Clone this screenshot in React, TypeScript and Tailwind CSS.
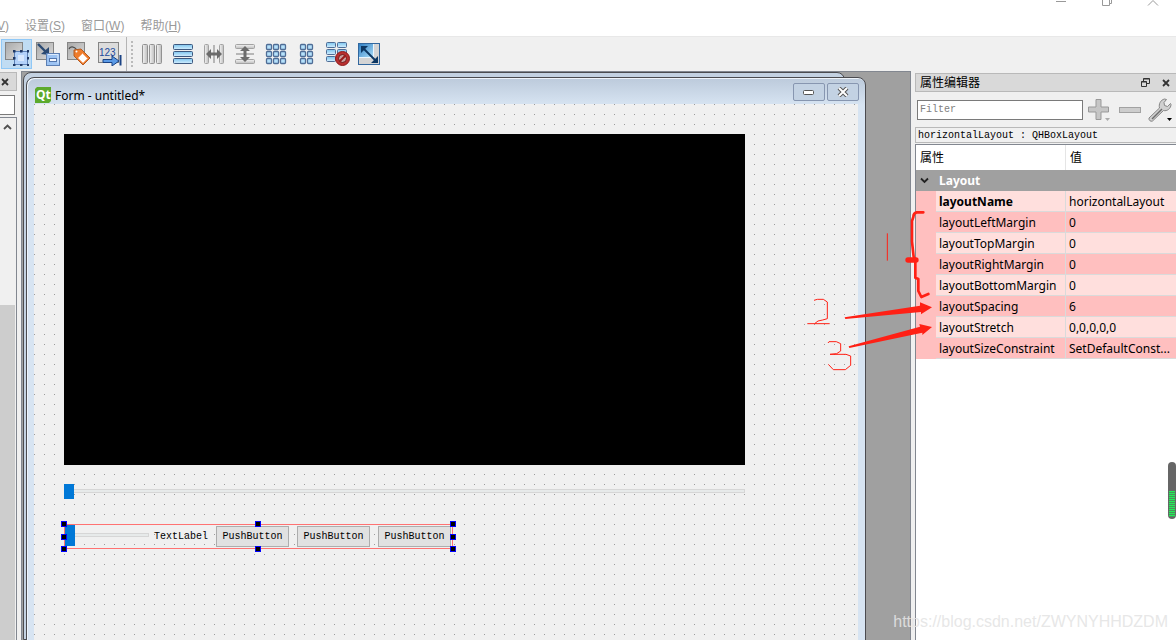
import React from "react";

const properties = [
  { name: "layoutName", value: "horizontalLayout", bold: true },
  { name: "layoutLeftMargin", value: "0" },
  { name: "layoutTopMargin", value: "0" },
  { name: "layoutRightMargin", value: "0" },
  { name: "layoutBottomMargin", value: "0" },
  { name: "layoutSpacing", value: "6" },
  { name: "layoutStretch", value: "0,0,0,0,0" },
  { name: "layoutSizeConstraint", value: "SetDefaultConst..." },
];

const menus = [
  { label: "设置", key: "S" },
  { label: "窗口", key: "W" },
  { label: "帮助", key: "H" },
];

// Gradients shared by all the toolbar icons
function IconDefs() {
  return (
    <svg className="absolute h-0 w-0" aria-hidden="true">
      <defs>
        <linearGradient id="grey" x1="0" y1="0" x2="1" y2="1">
          <stop offset="0" stopColor="#a9a9a9" />
          <stop offset="1" stopColor="#dcdcdc" />
        </linearGradient>
        <linearGradient id="bar" x1="0" y1="0" x2="1" y2="0">
          <stop offset="0" stopColor="#f4f4f4" />
          <stop offset="1" stopColor="#bdbdbd" />
        </linearGradient>
        <linearGradient id="blue" x1="0" y1="0" x2="0" y2="1">
          <stop offset="0" stopColor="#7cc4ee" />
          <stop offset="1" stopColor="#d5efff" />
        </linearGradient>
        <linearGradient id="sky" x1="0" y1="0" x2="1" y2="1">
          <stop offset="0" stopColor="#2f7fc4" />
          <stop offset="1" stopColor="#a8dcf8" />
        </linearGradient>
      </defs>
    </svg>
  );
}

function Icon({ children }: { children: React.ReactNode }) {
  return (
    <svg width="24" height="24" viewBox="0 0 24 24" fill="none" aria-hidden="true">
      {children}
    </svg>
  );
}

function GreyPanel() {
  return <rect x="0.5" y="0.5" width="17" height="17" fill="url(#grey)" stroke="#858585" />;
}

function EditWidgetsIcon() {
  const dots = [
    [8, 8], [15, 8], [22, 8], [8, 15], [22, 15], [8, 22], [15, 22], [22, 22],
  ];
  return (
    <Icon>
      <GreyPanel />
      <rect x="9.5" y="9.5" width="13" height="13" fill="#b3d2fa" stroke="#5b7fb5" />
      <rect x="13" y="13" width="6" height="6" fill="#d6e7fd" />
      {dots.map(([x, y]) => (
        <rect key={`${x}-${y}`} x={x} y={y} width="2.5" height="2.5" fill="#1f3864" />
      ))}
    </Icon>
  );
}

function EditSignalsIcon() {
  return (
    <Icon>
      <GreyPanel />
      <path d="M2 2l9 9" stroke="#2b4a73" strokeWidth="2.4" />
      <path d="M13 13V5L5 12z" fill="#2b4a73" />
      <rect x="10.5" y="11.5" width="13" height="12" fill="#9cc3f3" stroke="#5c7fb3" />
      <path d="M12 12.5h10v9" stroke="#dcebfd" />
      <rect x="13.5" y="16.5" width="7" height="3" fill="#f5f9ff" stroke="#5377ae" />
    </Icon>
  );
}

function EditBuddiesIcon() {
  return (
    <Icon>
      <GreyPanel />
      <path d="M2 7c1-3 5-3 8 1" stroke="#4e4e4e" strokeWidth="1.2" />
      <path d="M7 8l7-1 9 9-7 7-9-9z" fill="#ef7c2b" stroke="#b35a22" />
      <path d="M15.500 11.500l5 5-4.500 4.500-5-5z" fill="#fff" stroke="#f7b184" />
      <circle cx="9.5" cy="9.5" r="1" fill="#fff" />
    </Icon>
  );
}

function TabOrderIcon() {
  return (
    <Icon>
      <rect x="0.5" y="0.5" width="20" height="20" fill="#dcdcdc" stroke="#858585" />
      <text x="1" y="14" fontSize="10" fill="#1c4a9c" fontFamily="Liberation Sans, sans-serif">
        123
      </text>
      <path d="M5 17.5h9v-3.500l7 5-7 5v-3.500H5z" fill="#5b9ae6" stroke="#1b4384" />
      <path d="M22.5 13v10.500" stroke="#1b4384" strokeWidth="2" />
    </Icon>
  );
}

function LayoutHIcon() {
  return (
    <Icon>
      {[2.5, 9.5, 16.5].map((x) => (
        <rect key={x} x={x} y="2.5" width="5" height="19" rx="1" fill="url(#bar)" stroke="#929292" />
      ))}
    </Icon>
  );
}

function LayoutVIcon() {
  return (
    <Icon>
      {[2.5, 9.5, 16.5].map((y) => (
        <rect key={y} x="2.5" y={y} width="19" height="5" rx="1" fill="url(#blue)" stroke="#3d587f" />
      ))}
    </Icon>
  );
}

function SplitArrows() {
  return (
    <>
      <rect x="2.5" y="2.5" width="4" height="19" rx="1" fill="url(#bar)" stroke="#a2a2a2" />
      <rect x="17.5" y="2.5" width="4" height="19" rx="1" fill="url(#bar)" stroke="#a2a2a2" />
      <path d="M12 3v18" stroke="#7c7c7c" />
      <path d="M4 12l5-5v3.500h6V7l5 5-5 5v-3.500H9V17z" fill="#6b6b6b" />
    </>
  );
}

function SplitHIcon() {
  return (
    <Icon>
      <SplitArrows />
    </Icon>
  );
}

function SplitVIcon() {
  return (
    <Icon>
      <g transform="rotate(90 12 12)">
        <SplitArrows />
      </g>
    </Icon>
  );
}

function GridIcon({ columns }: { columns: number[] }) {
  return (
    <Icon>
      {columns.map((x) =>
        [2.5, 9.5, 16.5].map((y) => (
          <rect key={`${x}-${y}`} x={x} y={y} width="5" height="5" rx="1" fill="#b5e1fb" stroke="#4f6d96" strokeWidth="1.3" />
        ))
      )}
    </Icon>
  );
}

function BreakLayoutIcon() {
  return (
    <Icon>
      {[0.5, 7.5, 14.5].map((y) => (
        <g key={y} fill="url(#blue)" stroke="#4f6d96">
          <rect x="0.5" y={y} width="9" height="5" rx="1" />
          <rect x="11.5" y={y} width="9" height="5" rx="1" />
        </g>
      ))}
      <circle cx="16.5" cy="16.5" r="7" fill="#b92f2f" stroke="#8d1a1a" />
      <circle cx="16.5" cy="16.5" r="4" fill="#c9a0a0" stroke="#6e1616" />
      <path d="M13.5 19.500l6-6" stroke="#9b1c1c" strokeWidth="2.2" />
    </Icon>
  );
}

function AdjustSizeIcon() {
  return (
    <Icon>
      <rect x="1.5" y="1.5" width="21" height="21" fill="#d4d4d4" stroke="#32679e" />
      <path d="M2 2h14v13H2z" fill="url(#sky)" />
      <path d="M16.5 2v13.500H2" stroke="#e9f6ff" />
      <path d="M7 7l11 11" stroke="#0c3763" strokeWidth="2" />
      <path d="M4 4h7L4 11zM21 21h-7l7-7z" fill="#0c3763" />
    </Icon>
  );
}

function PlusIcon() {
  return (
    <svg width="24" height="24" viewBox="0 0 24 24" aria-hidden="true">
      <path d="M9 1.500h5V9h7.500v5H14v7.500H9V14H1.500V9H9z" fill="#c6c6c6" stroke="#999" />
      <path d="M18 20h5l-2.500 3z" fill="#aaa" />
    </svg>
  );
}

function MinusIcon() {
  return (
    <svg width="24" height="24" viewBox="0 0 24 24" aria-hidden="true">
      <rect x="1.5" y="9.5" width="21" height="5" fill="#cdcdcd" stroke="#a2a2a2" />
    </svg>
  );
}

function WrenchIcon() {
  return (
    <svg width="26" height="26" viewBox="0 0 26 26" aria-hidden="true">
      <path
        d="M2 21L12.500 11c-1-4 1-8 5-9l2 .5-2.500 3 .5 3 3 1 3-3 .5 1c0 4-4 7-7.500 6L5.500 24c-2 1-4-1-3.500-3z"
        fill="#d0d0d0"
        stroke="#858585"
      />
      <path d="M5 22l10-10" stroke="#6b6b6b" strokeWidth="1.5" />
      <path d="M20 21h5l-2.500 3z" fill="#000" />
    </svg>
  );
}

function CloseGlyph() {
  return (
    <svg width="8" height="8" viewBox="0 0 8 8" aria-hidden="true">
      <path d="M1 1l6 6M7 1L1 7" stroke="#333" strokeWidth="1.8" />
    </svg>
  );
}

function ToolButton({ label, active, children }: { label: string; active?: boolean; children: React.ReactNode }) {
  return (
    <button
      aria-label={label}
      className={`flex h-[30px] w-[31px] items-center justify-center border ${
        active ? "border-[#90c8f6] bg-[#c0dcf3]" : "border-transparent"
      }`}
    >
      {children}
    </button>
  );
}

function TopBar() {
  return (
    <header className="flex h-9 shrink-0 items-end justify-between bg-white">
      <nav className="-ml-[3px] flex gap-4 pb-0.5 text-[12px] leading-4 text-[#999]">
        <button>
          <u>V</u>)
        </button>
        {menus.map((menu) => (
          <button key={menu.key}>
            {menu.label}(<u>{menu.key}</u>)
          </button>
        ))}
      </nav>
      <div className="flex gap-[34px] self-start pr-[17px]">
        <button aria-label="Minimize">
          <svg width="12" height="8" viewBox="0 0 12 8" stroke="#999">
            <path d="M1 1.500h10" />
          </svg>
        </button>
        <button aria-label="Restore">
          <svg width="12" height="8" viewBox="0 0 12 8" fill="none" stroke="#999">
            <path d="M1.500 0v5.500h7V0M8.500 3.500h2V0" />
          </svg>
        </button>
        <button aria-label="Close">
          <svg width="12" height="8" viewBox="0 0 12 8" fill="none" stroke="#999">
            <path d="M1 5.500L6 .5l5 5" />
          </svg>
        </button>
      </div>
    </header>
  );
}

function ToolBar() {
  return (
    <div className="flex h-[35px] shrink-0 items-center border-t border-[#e8e8e8] pl-px">
      <ToolButton label="Edit Widgets" active>
        <EditWidgetsIcon />
      </ToolButton>
      <ToolButton label="Edit Signals/Slots">
        <EditSignalsIcon />
      </ToolButton>
      <ToolButton label="Edit Buddies">
        <EditBuddiesIcon />
      </ToolButton>
      <ToolButton label="Edit Tab Order">
        <TabOrderIcon />
      </ToolButton>
      <div className="ml-px h-full w-px bg-[#b4b4b4]" />
      <div className="mr-[3px] ml-1 h-[26px] border-l-2 border-dotted border-[#bababa]" />
      <ToolButton label="Lay Out Horizontally">
        <LayoutHIcon />
      </ToolButton>
      <ToolButton label="Lay Out Vertically">
        <LayoutVIcon />
      </ToolButton>
      <ToolButton label="Lay Out Horizontally in Splitter">
        <SplitHIcon />
      </ToolButton>
      <ToolButton label="Lay Out Vertically in Splitter">
        <SplitVIcon />
      </ToolButton>
      <ToolButton label="Lay Out in a Grid">
        <GridIcon columns={[2.5, 9.5, 16.5]} />
      </ToolButton>
      <ToolButton label="Lay Out in a Form Layout">
        <GridIcon columns={[5.5, 12.5]} />
      </ToolButton>
      <ToolButton label="Break Layout">
        <BreakLayoutIcon />
      </ToolButton>
      <ToolButton label="Adjust Size">
        <AdjustSizeIcon />
      </ToolButton>
    </div>
  );
}

function WidgetBox() {
  return (
    <aside className="flex w-[21px] shrink-0 flex-col pt-px pr-1">
      <div className="flex h-[19px] items-center border border-l-0 border-[#b9b9b9] bg-[#d9d9d9] pl-px">
        <button aria-label="Close widget box">
          <CloseGlyph />
        </button>
      </div>
      <input
        aria-label="Filter widgets"
        className="mt-1 mr-0.5 h-5 w-[15px] border border-l-0 border-[#7a7a7a] bg-white outline-none"
      />
      <div className="mt-0.5 flex flex-1 flex-col border-t border-r border-[#828790]">
        <button aria-label="Scroll up" className="flex h-[17px] items-center pl-[3px]">
          <svg width="9" height="6" viewBox="0 0 9 6" fill="none" aria-hidden="true">
            <path d="M1 5l3.500-3.500L8 5" stroke="#505050" strokeWidth="1.8" />
          </svg>
        </button>
        <div className="mt-[170px] mr-px flex-1 bg-[#cdcdcd]" />
      </div>
    </aside>
  );
}

const slider =
  "block appearance-none bg-transparent [&::-webkit-slider-runnable-track]:h-1 [&::-webkit-slider-runnable-track]:border [&::-webkit-slider-runnable-track]:border-[#d6d6d6] [&::-webkit-slider-runnable-track]:bg-[#e7eaea] [&::-webkit-slider-thumb]:appearance-none [&::-webkit-slider-thumb]:-ml-px [&::-webkit-slider-thumb]:w-[10px] [&::-webkit-slider-thumb]:bg-[#0078d7]";

const handles = [
  "-left-1 -top-1",
  "left-1/2 -ml-1 -top-1",
  "-right-1 -top-1",
  "-left-1 top-1/2 -mt-[3px]",
  "-right-1 top-1/2 -mt-[3px]",
  "-left-1 -bottom-1",
  "left-1/2 -ml-1 -bottom-1",
  "-right-1 -bottom-1",
];

function FormCanvas() {
  return (
    <div className="min-h-0 flex-1 bg-[#f0f0f0] bg-[linear-gradient(90deg,#f0f0f0_9px,transparent_9px),linear-gradient(#f0f0f0_9px,#9b9b9b_9px)] bg-[length:10px_10px] bg-position-[-9px_-9px] px-[30px] pt-[30px]">
      <div className="h-[331px] w-[681px] bg-black" />
      <input
        type="range"
        aria-label="Position"
        defaultValue={0}
        className={`${slider} mt-[18px] h-[15px] w-[681px] [&::-webkit-slider-thumb]:-mt-1.5 [&::-webkit-slider-thumb]:h-[15px]`}
      />
      <div className="relative mt-[26px] flex h-[25px] w-[389px] items-center border border-[#ff7272] pr-px font-['Liberation_Mono',monospace] text-[10px] text-black">
        <input
          id="volume"
          type="range"
          defaultValue={0}
          className={`${slider} mb-1 h-[19px] w-[84px] [&::-webkit-slider-thumb]:-mt-[9px] [&::-webkit-slider-thumb]:h-[21px]`}
        />
        <label htmlFor="volume" className="mr-2 ml-[5px]">
          TextLabel
        </label>
        <div className="flex flex-1 gap-2">
          {[1, 2, 3].map((n) => (
            <button key={n} className="h-[21px] flex-1 border border-[#adadad] bg-[#e1e1e1]">
              PushButton
            </button>
          ))}
        </div>
        {handles.map((position) => (
          <span key={position} className={`absolute h-1.5 w-1.5 border border-[#0000ff] bg-black ${position}`} />
        ))}
      </div>
    </div>
  );
}

function FormWindow() {
  return (
    <section className="absolute top-[5px] -bottom-2 left-1 flex w-[840px] flex-col rounded-t-lg border border-[#4b4b4f] bg-[#d7e4f2] bg-linear-to-b from-[#bccadb] to-[#d7e4f2] to-[27px] px-[7px] shadow-[inset_1px_1px_0_#eef4fb]">
      <div className="flex h-[26px] shrink-0 items-center gap-1 pl-px">
        <svg width="16" height="16" viewBox="0 0 16 16" className="mt-2" aria-hidden="true">
          <path d="M2 0h14v14l-2 2H0V2z" fill="#5caa2c" />
          <text x="1" y="12" fontSize="12" fontWeight="700" fill="#fff" fontFamily="Open Sans, sans-serif">
            Qt
          </text>
        </svg>
        <h1 className="mt-2.5 flex-1 font-['Noto_Sans',sans-serif] text-[12px] leading-4 text-black">Form - untitled*</h1>
        <div className="mt-0.5 -mr-px flex gap-0.5">
          <button aria-label="Minimize form" className="flex h-[18px] w-8 items-center justify-center rounded-xs border border-[#8796b0] bg-[#c3d2e3]">
            <svg width="12" height="6" viewBox="0 0 12 6" aria-hidden="true">
              <rect x="0.5" y="1.5" width="10" height="4" rx="1" fill="#fff" stroke="#555" />
            </svg>
          </button>
          <button aria-label="Close form" className="flex h-[18px] w-8 items-center justify-center rounded-xs border border-[#8796b0] bg-[#c3d2e3]">
            <svg width="12" height="10" viewBox="0 0 12 10" aria-hidden="true">
              <path d="M2 1l8 8M10 1L2 9" stroke="#555" strokeWidth="4" />
              <path d="M2 1l8 8M10 1L2 9" stroke="#fff" strokeWidth="2" />
            </svg>
          </button>
        </div>
      </div>
      <FormCanvas />
    </section>
  );
}

function PropertyEditor() {
  return (
    <aside className="flex w-[261px] shrink-0 flex-col pt-[2px] text-black">
      <div className="flex h-[19px] items-center border border-r-0 border-[#b9b9b9] bg-[#d9d9d9] pr-1.5 pl-1">
        <h2 className="flex-1 text-[12px] leading-4">属性编辑器</h2>
        <button aria-label="Float" className="mr-3">
          <svg width="9" height="9" viewBox="0 0 9 9" fill="none" stroke="#333" aria-hidden="true">
            <path d="M2.500 3V.5h6v5H6M2.500 1h6M.5 3.500h5v5h-5zM.5 4h5" />
          </svg>
        </button>
        <button aria-label="Close property editor">
          <CloseGlyph />
        </button>
      </div>
      <div className="flex h-[35px] items-center pr-[3px] pl-0.5">
        <input
          placeholder="Filter"
          aria-label="Filter"
          className="h-5 min-w-0 flex-1 border border-[#7a7a7a] bg-white pl-0.5 font-['Liberation_Mono',monospace] text-[10px] outline-none placeholder:text-[#808080]"
        />
        <button aria-label="Add property" className="ml-1">
          <PlusIcon />
        </button>
        <button aria-label="Remove property" className="ml-[7px]">
          <MinusIcon />
        </button>
        <button aria-label="Configure" className="ml-[5px]">
          <WrenchIcon />
        </button>
      </div>
      <div className="h-4 border border-r-0 border-[#b9b9b9] pl-0.5 font-['Liberation_Mono',monospace] text-[10px] leading-4 whitespace-pre">
        horizontalLayout : QHBoxLayout
      </div>
      <div className="mt-px flex-1 border-t border-l border-[#828790] bg-white">
        <table className="w-full table-fixed border-separate border-spacing-0 text-left font-['Noto_Sans','Noto_Sans_CJK_SC',sans-serif] text-[12px] leading-4">
          <colgroup>
            <col className="w-5" />
            <col className="w-[130px]" />
            <col />
          </colgroup>
          <thead>
            <tr className="h-[25px]">
              <th colSpan={2} className="border-r border-[#e5e5e5] p-0 pl-1 font-normal">
                属性
              </th>
              <th className="p-0 pl-1 font-normal">值</th>
            </tr>
          </thead>
          <tbody>
            <tr className="h-[21px] bg-[#a0a0a0] font-bold text-white">
              <td className="p-0 pl-1">
                <svg width="9" height="7" viewBox="0 0 9 7" fill="none" aria-hidden="true">
                  <path d="M1 1.500L4.500 5 8 1.500" stroke="#222" strokeWidth="1.8" />
                </svg>
              </td>
              <td colSpan={2} className="p-0 pl-[3px]">
                Layout
              </td>
            </tr>
            {properties.map((property, index) => (
              <tr key={property.name} className={`h-[21px] ${index % 2 === 0 ? "bg-[#ffdfdd]" : "bg-[#ffbfbf]"}`}>
                <td className="bg-[#ffbfbf] p-0"></td>
                <td className={`border-r border-b border-[#dadada] p-0 pt-0.5 pl-[3px] ${property.bold ? "font-bold" : ""}`}>
                  {property.name}
                </td>
                <td className="border-b border-[#dadada] p-0 pt-0.5 pl-[3px] whitespace-nowrap">{property.value}</td>
              </tr>
            ))}
          </tbody>
        </table>
      </div>
    </aside>
  );
}

// Red pen marks drawn over the form and the property list
function PenMarks() {
  return (
    <svg
      width="386"
      height="190"
      viewBox="0 0 1158 570"
      fill="none"
      className="pointer-events-none absolute top-[190px] right-0"
      aria-hidden="true"
    >
      <g stroke="#ff2015" strokeWidth="3">
        <path d="M292 130V212" />
        <path d="M72 331l10-3h18l12 8v50l-14 4-14 3-9 7M52 401H119" />
        <path d="M114 459l3-4h22l13 6v22l-12 8-20 2h48l14 5v28l-16 13h-36l-15-16" />
      </g>
      <path
        d="M400 67h-20q-10 2-10 14l-4 12v62l5 46 5 6v56l9 4v36l9 18 21-9"
        stroke="#ff2015"
        strokeWidth="8"
        strokeLinecap="round"
        strokeLinejoin="round"
      />
      <path d="M354 210h24" stroke="#ff2015" strokeWidth="16" strokeLinecap="round" />
      <path d="M164 382L390 347V337L426 352 393 373V366L166 387z" fill="#ff2015" />
      <path d="M176 469L390 410 388 402 426 411 397 435V428L178 474z" fill="#ff2015" />
    </svg>
  );
}

export default function App() {
  return (
    <div className="relative flex h-screen min-h-0 flex-col overflow-hidden bg-[#f0f0f0] font-['Liberation_Sans','Noto_Sans_CJK_SC',sans-serif]">
      <IconDefs />
      <TopBar />
      <ToolBar />
      <div className="flex min-h-0 flex-1">
        <WidgetBox />
        <main className="relative min-w-0 flex-1 overflow-hidden border-t border-r border-l border-[#828790] bg-[#a0a0a0]">
          <div className="absolute top-0 bottom-0 left-px w-[822px] rounded-t-lg border border-[#4b4b4f] bg-[#c3d1e1]" />
          <FormWindow />
        </main>
        <div className="w-1 shrink-0" />
        <PropertyEditor />
      </div>
      <PenMarks />
      <div className="absolute top-[462px] right-0 flex h-[57px] w-2 flex-col justify-end rounded-full bg-[#666] px-px pb-0.5">
        <div className="h-[26px] bg-[repeating-linear-gradient(#22ee58_0_1px,#4b8f5c_1px_2px)]" />
      </div>
      <a
        href="#"
        className="absolute right-2 bottom-2 text-[16px] leading-5 text-[#e4e4e4]/90"
      >
        https://blog.csdn.net/ZWYNYHHDZDM
      </a>
    </div>
  );
}
